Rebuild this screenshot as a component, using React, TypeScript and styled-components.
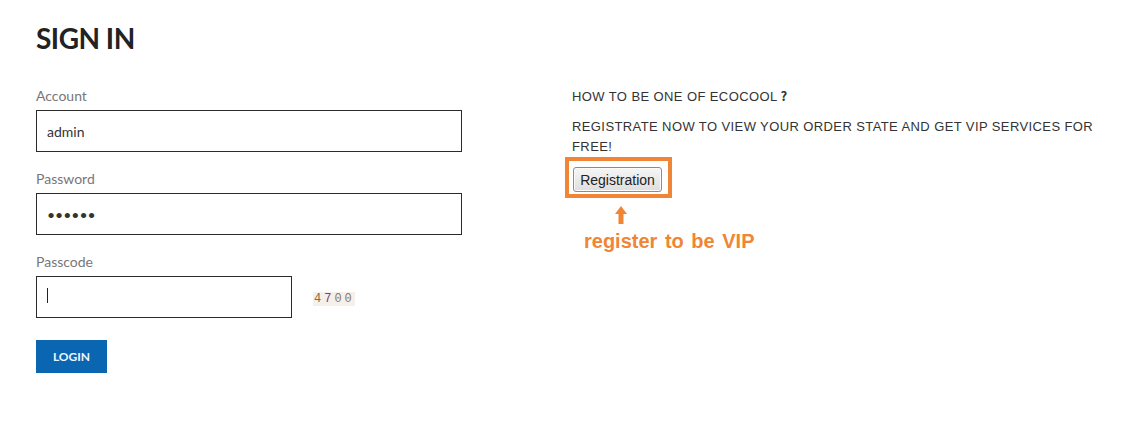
import React from 'react';
import styled, { createGlobalStyle } from 'styled-components';

const GlobalStyle = createGlobalStyle`
  html, body {
    margin: 0;
    padding: 0;
    background: #ffffff;
  }
  * {
    box-sizing: border-box;
  }
`;

const Page = styled.div`
  width: 1144px;
  height: 428px;
  padding: 20px 36px 0 36px;
  font-family: 'Lato', 'Liberation Sans', sans-serif;
`;

const Title = styled.h1`
  margin: 0;
  font-size: 28px;
  line-height: 36px;
  font-weight: 700;
  color: #222222;
  letter-spacing: -0.5px;
`;

const Columns = styled.div`
  display: grid;
  grid-template-columns: 536px 1fr;
  margin-top: 30px;
`;

const FormColumn = styled.div`
  display: flex;
  flex-direction: column;
`;

const Label = styled.label`
  display: block;
  font-size: 14px;
  line-height: 20px;
  color: #777777;
  margin-bottom: 4px;
`;

const Field = styled.div`
  margin-bottom: 17px;
`;

const Input = styled.input<{ $width: number }>`
  display: block;
  width: ${(p) => p.$width}px;
  height: 42px;
  border: 1px solid #2b2b2b;
  padding: 0 10px;
  font-family: 'Lato', sans-serif;
  font-size: 14px;
  color: #333333;
  outline: none;
  border-radius: 0;
  background: #ffffff;
`;

const PasscodeRow = styled.div`
  display: flex;
  align-items: center;
  gap: 21px;
`;

const CaretBox = styled.div`
  position: relative;
  &::after {
    content: '';
    position: absolute;
    left: 11px;
    top: 12px;
    width: 1px;
    height: 15px;
    background: #222222;
  }
`;

const Captcha = styled.span`
  display: inline-flex;
  font-family: 'Liberation Mono', monospace;
  font-size: 12px;
  line-height: 14px;
  letter-spacing: 3px;
  padding: 0 0 0 1px;
  background: #f5f1ea;
  margin-top: 3px;
`;

const Digit = styled.span<{ $color: string }>`
  color: ${(p) => p.$color};
`;

const LoginButton = styled.button`
  align-self: flex-start;
  width: 71px;
  height: 33px;
  margin-top: 5px;
  border: none;
  background: #0b66b1;
  color: #eef6ff;
  font-family: 'Lato', sans-serif;
  font-size: 12px;
  font-weight: 700;
  padding: 0;
`;

const InfoColumn = styled.div`
  display: flex;
  flex-direction: column;
  font-family: 'Liberation Sans', Arial, sans-serif;
  font-size: 13px;
  letter-spacing: 0.4px;
  line-height: 20px;
  color: #333333;
`;

const Text = styled.p`
  margin: 0 0 10px 0;
  max-width: 536px;
  &:last-of-type {
    margin-bottom: 0;
  }
`;

const Question = styled.span`
  font-family: 'Noto Sans CJK SC', sans-serif;
  font-weight: 700;
  margin-left: 3px;
`;

const Highlight = styled.div`
  align-self: flex-start;
  display: inline-flex;
  margin-left: -7px;
  border: 4px solid #f08535;
  padding: 6px 6px 2px 4px;
`;

const RegButton = styled.button`
  height: 25px;
  width: 89px;
  padding: 0;
  border: 1px solid #8c8c8c;
  border-radius: 3px;
  background: linear-gradient(#f6f6f6, #dedede);
  font-family: 'Liberation Sans', Arial, sans-serif;
  font-size: 14px;
  color: #222222;
  box-shadow: inset 0 0 0 1px #fbfbfb;
`;

const ArrowMark = styled.svg`
  display: block;
  margin: 8px 0 0 43px;
`;

const Note = styled.div`
  margin: 5px 0 0 12px;
  font-family: 'Liberation Sans', Arial, sans-serif;
  font-size: 20px;
  line-height: 24px;
  font-weight: 700;
  letter-spacing: 0;
  color: #f08535;
  word-spacing: 2px;
`;

const digits = [
  { d: '4', c: '#8a6b3c' },
  { d: '7', c: '#7b3d86' },
  { d: '0', c: '#8a7a5c' },
  { d: '0', c: '#8a7a5c' },
];

const App = () => {
  return (
    <Page>
      <GlobalStyle />
      <Title>SIGN IN</Title>
      <Columns>
        <FormColumn>
          <Field>
            <Label>Account</Label>
            <Input $width={426} type="text" defaultValue="admin" />
          </Field>
          <Field>
            <Label>Password</Label>
            <Input $width={426} type="password" defaultValue="123456" />
          </Field>
          <Field>
            <Label>Passcode</Label>
            <PasscodeRow>
              <CaretBox>
                <Input $width={256} type="text" defaultValue="" />
              </CaretBox>
              <Captcha>
                {digits.map((x, i) => (
                  <Digit key={i} $color={x.c}>
                    {x.d}
                  </Digit>
                ))}
              </Captcha>
            </PasscodeRow>
          </Field>
          <LoginButton>LOGIN</LoginButton>
        </FormColumn>
        <InfoColumn>
          <Text>
            HOW TO BE ONE OF ECOCOOL<Question>?</Question>
          </Text>
          <Text>REGISTRATE NOW TO VIEW YOUR ORDER STATE AND GET VIP SERVICES FOR FREE!</Text>
          <Highlight>
            <RegButton>Registration</RegButton>
          </Highlight>
          <ArrowMark width="12" height="18" viewBox="0 0 12 18">
            <path d="M6 0 L12 8 L8.5 8 L8.5 18 L3.5 18 L3.5 8 L0 8 Z" fill="#f08535" />
          </ArrowMark>
          <Note>register to be VIP</Note>
        </InfoColumn>
      </Columns>
    </Page>
  );
};

export default App;
